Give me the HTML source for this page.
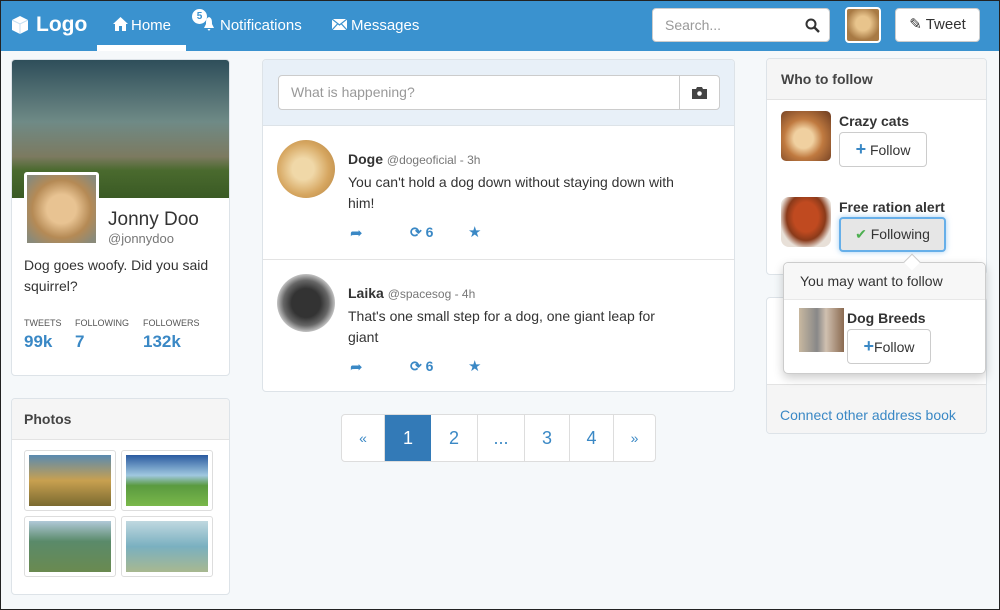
<!DOCTYPE html>
<html><head><style>
*{box-sizing:border-box;margin:0;padding:0}
body{width:1000px;height:610px;overflow:hidden;background:#f5f8fa;font-family:"Liberation Sans",sans-serif;color:#333;position:relative}
.frame{position:absolute;left:0;top:0;width:1000px;height:610px;border:1px solid #222;pointer-events:none;z-index:9}
.nav{position:absolute;left:0;top:0;width:1000px;height:51px;background:#3a92cf}
.nav .t{position:absolute;color:#fff;font-size:15px;top:17px}
.a{position:absolute}
.panel{position:absolute;background:#fff;border:1px solid #dde3e8;border-radius:4px}
.hd{background:#f5f5f5;border-bottom:1px solid #e3e3e3;font-weight:bold;font-size:14px;color:#444;padding:11px 12px}
.btn{position:absolute;background:#fff;border:1px solid #ccc;border-radius:4px;font-size:14px;color:#333;text-align:center}
.blue{color:#3a88c5}
.stat{position:absolute;font-size:9px;color:#555}
.num{position:absolute;font-size:17px;font-weight:bold;color:#3a88c5}
</style></head><body>
<div class="frame"></div>
<div class="nav">
 <svg class="a" style="left:10px;top:15px" width="20" height="20" viewBox="0 0 20 20"><path d="M10 1 L18 5 L18 15 L10 19 L2 15 L2 5Z" fill="#fff"/><path d="M2 5 L10 9 L18 5 M10 9 V19" stroke="#3a92cf" stroke-width="1" fill="none" opacity=".3"/></svg>
 <div class="t" style="left:36px;top:13px;font-size:21px;font-weight:bold">Logo</div>
 <svg class="a" style="left:113px;top:17px" width="15" height="14" viewBox="0 0 15 14"><path d="M7.5 0 L15 7 H13 V14 H9 V9 H6 V14 H2 V7 H0Z" fill="#fff"/></svg>
 <div class="t" style="left:131px">Home</div>
 <div class="a" style="left:97px;top:45px;width:89px;height:6px;background:#fff"></div>
 <div class="a" style="left:192px;top:9px;width:15px;height:15px;border-radius:50%;background:#fff;color:#3a92cf;font-size:10px;font-weight:bold;text-align:center;line-height:15px">5</div>
 <svg class="a" style="left:203px;top:17px" width="12" height="14" viewBox="0 0 12 14"><path d="M6 0 C9 1 9 4 9 7 L11 11 H1 L3 7 C3 4 3 1 6 0Z M4.5 12 H7.5 L6 14Z" fill="#fff"/></svg>
 <div class="t" style="left:220px">Notifications</div>
 <svg class="a" style="left:332px;top:19px" width="15" height="11" viewBox="0 0 15 11"><rect width="15" height="11" fill="#fff"/><path d="M0 0 L7.5 6 L15 0 M0 11 L5.5 5 M15 11 L9.5 5" stroke="#3a92cf" stroke-width="1.2" fill="none"/></svg>
 <div class="t" style="left:351px">Messages</div>
 <div class="a" style="left:652px;top:8px;width:178px;height:34px;background:#fff;border-radius:4px;border:1px solid #ccc"><span style="position:absolute;left:12px;top:8px;font-size:14px;color:#999">Search...</span>
 <svg class="a" style="left:152px;top:9px" width="15" height="15" viewBox="0 0 15 15"><circle cx="6" cy="6" r="4.5" stroke="#333" stroke-width="2" fill="none"/><path d="M9.5 9.5 L14 14" stroke="#333" stroke-width="2.4"/></svg></div>
 <div class="a" style="left:845px;top:7px;width:36px;height:36px;border-radius:4px;border:2px solid #fff;background:radial-gradient(circle at 50% 45%,#e8c48c 30%,#a87a44 70%)"></div>
 <div class="btn" style="left:895px;top:8px;width:85px;height:34px;line-height:32px;font-size:15px">✎ Tweet</div>
</div>

<div class="panel" style="left:11px;top:59px;width:219px;height:317px;overflow:hidden">
 <div style="height:138px;background:linear-gradient(180deg,#2e4e5a 0%,#6f8a86 45%,#7c7a60 70%,#4a6a2e 80%,#3a5a24 100%)"></div>
 <div class="a" style="left:12px;top:112px;width:75px;height:74px;border:3px solid #fff;border-radius:3px;background:radial-gradient(ellipse at 50% 50%,#e8c392 30%,#b58a55 60%,#8a8a7a 90%)"></div>
 <div class="a" style="left:96px;top:149px;font-size:19px;color:#333">Jonny Doo</div>
 <div class="a" style="left:96px;top:171px;font-size:13px;color:#777">@jonnydoo</div>
 <div class="a" style="left:12px;top:195px;font-size:14px;line-height:21px;width:200px">Dog goes woofy. Did you said squirrel?</div>
 <div class="stat" style="left:12px;top:258px">TWEETS</div><div class="stat" style="left:63px;top:258px">FOLLOWING</div><div class="stat" style="left:131px;top:258px">FOLLOWERS</div>
 <div class="num" style="left:12px;top:272px">99k</div><div class="num" style="left:63px;top:272px">7</div><div class="num" style="left:131px;top:272px">132k</div>
</div>
<div class="panel" style="left:11px;top:398px;width:219px;height:197px;overflow:hidden">
 <div class="hd" style="padding:12px 12px">Photos</div>
 <div class="a" style="left:12px;top:51px;width:92px;height:61px;border:1px solid #ddd;border-radius:3px;padding:4px"><div style="height:100%;background:linear-gradient(#5a8ab0,#c8a050 50%,#7a6a30)"></div></div>
 <div class="a" style="left:109px;top:51px;width:92px;height:61px;border:1px solid #ddd;border-radius:3px;padding:4px"><div style="height:100%;background:linear-gradient(#2a5aa0,#a0c8e0 40%,#5a9a40 60%,#7ab84a)"></div></div>
 <div class="a" style="left:12px;top:117px;width:92px;height:61px;border:1px solid #ddd;border-radius:3px;padding:4px"><div style="height:100%;background:linear-gradient(#b0c8d8,#5a8a6a 40%,#6a8a50)"></div></div>
 <div class="a" style="left:109px;top:117px;width:92px;height:61px;border:1px solid #ddd;border-radius:3px;padding:4px"><div style="height:100%;background:linear-gradient(#c0d8e0,#7ab0c0 50%,#a8b890)"></div></div>
</div>

<div class="panel" style="left:262px;top:59px;width:473px;height:333px;overflow:hidden">
 <div style="height:66px;background:#e8f0f8;border-bottom:1px solid #dde3e8"></div>
 <div class="a" style="left:15px;top:15px;width:442px;height:35px;background:#fff;border:1px solid #ccc;border-radius:4px">
  <span class="a" style="left:12px;top:8px;font-size:14px;color:#999">What is happening?</span>
  <div class="a" style="left:400px;top:0;width:1px;height:33px;background:#ccc"></div>
  <svg class="a" style="left:413px;top:10px" width="15" height="13" viewBox="0 0 15 13"><path d="M0 3 H4 L5 1 H10 L11 3 H15 V13 H0Z" fill="#444"/><circle cx="7.5" cy="7.5" r="2.3" fill="#fff"/></svg>
 </div>
 <div class="a" style="left:14px;top:80px;width:58px;height:58px;border-radius:50%;background:radial-gradient(circle at 45% 50%,#f0d8a8 25%,#d6a660 60%,#b08040)"></div>
 <div class="a" style="left:85px;top:91px;font-size:14px"><b>Doge</b> <span style="font-size:12px;color:#777">@dogeoficial - 3h</span></div>
 <div class="a" style="left:85px;top:112px;font-size:14px;line-height:21px;width:380px">You can't hold a dog down without staying down with<br>him!</div>
 <div class="a blue" style="left:87px;top:164px;font-size:15px">➦</div>
 <div class="a blue" style="left:147px;top:164px;font-size:14px;font-weight:bold">⟳ 6</div>
 <div class="a blue" style="left:205px;top:163px;font-size:15px">★</div>
 <div class="a" style="left:0;top:199px;width:473px;height:1px;background:#e3e3e3"></div>
 <div class="a" style="left:14px;top:214px;width:58px;height:58px;border-radius:50%;background:radial-gradient(circle at 50% 50%,#333 35%,#666 55%,#ddd 75%)"></div>
 <div class="a" style="left:85px;top:225px;font-size:14px"><b>Laika</b> <span style="font-size:12px;color:#777">@spacesog - 4h</span></div>
 <div class="a" style="left:85px;top:246px;font-size:14px;line-height:21px;width:380px">That's one small step for a dog, one giant leap for<br>giant</div>
 <div class="a blue" style="left:87px;top:298px;font-size:15px">➦</div>
 <div class="a blue" style="left:147px;top:298px;font-size:14px;font-weight:bold">⟳ 6</div>
 <div class="a blue" style="left:205px;top:297px;font-size:15px">★</div>
</div>
<div class="a" style="left:341px;top:414px;width:315px;height:48px;border:1px solid #ddd;border-radius:4px;background:#fff;display:flex;font-size:18px;color:#3a88c5">
 <div style="width:43px;text-align:center;line-height:46px;font-size:14px;border-right:1px solid #ddd">«</div>
 <div style="width:46px;text-align:center;line-height:46px;background:#337ab7;color:#fff">1</div>
 <div style="width:47px;text-align:center;line-height:46px;border-right:1px solid #ddd">2</div>
 <div style="width:47px;text-align:center;line-height:46px;border-right:1px solid #ddd">...</div>
 <div style="width:45px;text-align:center;line-height:46px;border-right:1px solid #ddd">3</div>
 <div style="width:44px;text-align:center;line-height:46px;border-right:1px solid #ddd">4</div>
 <div style="flex:1;text-align:center;line-height:46px;font-size:14px">»</div>
</div>

<div class="panel" style="left:766px;top:58px;width:221px;height:217px;overflow:hidden">
 <div class="hd" style="padding:12px 14px">Who to follow</div>
 <div class="a" style="left:14px;top:52px;width:50px;height:50px;border-radius:5px;background:radial-gradient(circle at 45% 55%,#f0d0a0 25%,#c07a40 50%,#6a3a20)"></div>
 <div class="a" style="left:72px;top:54px;font-size:14px;font-weight:bold">Crazy cats</div>
 <div class="btn" style="left:72px;top:73px;width:88px;height:35px;line-height:33px"><b class="blue" style="font-size:18px">+</b> Follow</div>
 <div class="a" style="left:14px;top:138px;width:50px;height:50px;border-radius:8px;background:radial-gradient(ellipse at 50% 40%,#c04a20 35%,#8a3a1a 55%,#e8e0d8 75%)"></div>
 <div class="a" style="left:72px;top:140px;font-size:14px;font-weight:bold">Free ration alert</div>
 <div class="btn" style="left:72px;top:158px;width:107px;height:35px;line-height:31px;background:#e6e6e6;border:2px solid #66afe9;box-shadow:0 0 6px rgba(102,175,233,.6)"><span style="color:#4caf50">✔</span> Following</div>
</div>
<div class="panel" style="left:766px;top:297px;width:221px;height:137px;overflow:hidden">
 <div class="a" style="left:0;top:86px;width:221px;height:51px;background:#f5f5f5;border-top:1px solid #e3e3e3"></div>
 <div class="a blue" style="left:13px;top:109px;font-size:14px">Connect other address book</div>
</div>
<div class="a" style="left:783px;top:262px;width:203px;height:112px;background:#fff;border:1px solid #ccc;border-radius:5px;box-shadow:0 4px 10px rgba(0,0,0,.2)">
 <div style="background:#f7f7f7;border-bottom:1px solid #e8e8e8;font-size:14px;padding:10px 16px;color:#333;border-radius:5px 5px 0 0">You may want to follow</div>
 <div class="a" style="left:15px;top:45px;width:45px;height:44px;background:linear-gradient(90deg,#c8b8a0,#888 40%,#d0c0b0 60%,#8a6a50)"></div>
 <div class="a" style="left:63px;top:47px;font-size:14px;font-weight:bold">Dog Breeds</div>
 <div class="btn" style="left:63px;top:66px;width:84px;height:35px;line-height:33px"><b class="blue" style="font-size:18px">+</b>Follow</div>
</div>
<div class="a" style="left:906px;top:256px;width:12px;height:12px;background:#fff;border-left:1px solid #ccc;border-top:1px solid #ccc;transform:rotate(45deg)"></div>
</body></html>
